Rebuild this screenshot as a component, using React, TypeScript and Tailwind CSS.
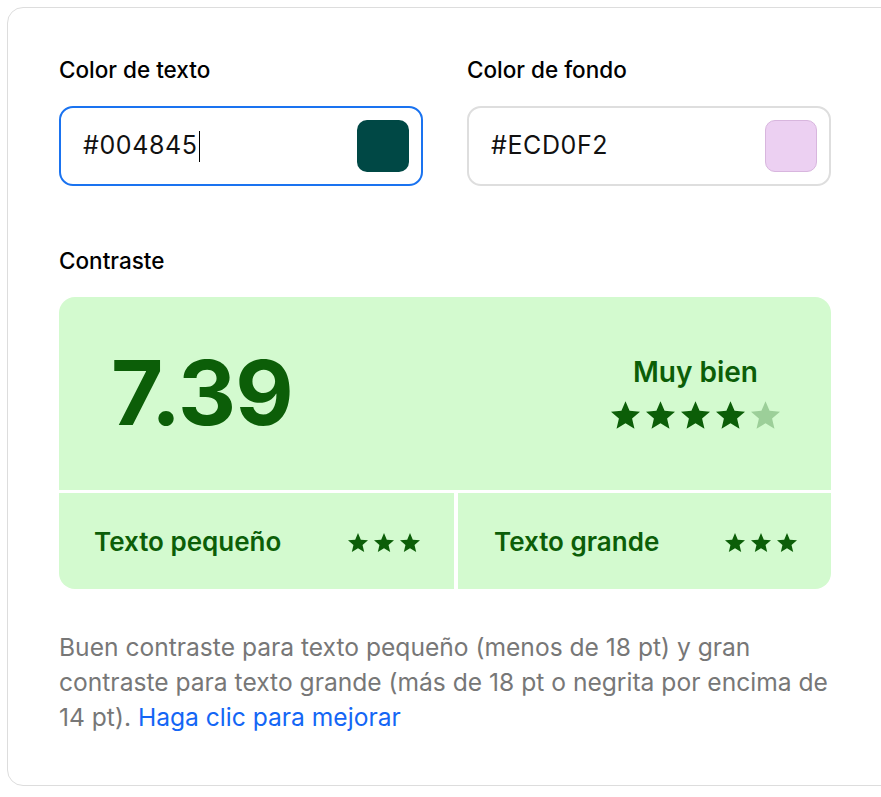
import React from "react";

const STAR = "M12 17.27L18.18 21l-1.64-7.03L22 9.24l-7.19-.61L12 2 9.19 8.63 2 9.24l5.46 4.73L5.82 21z";

function Star({ w, h, className }: { w: number; h: number; className: string }) {
  return (
    <svg width={w} height={h} viewBox="2 2 20 19" className={className}>
      <path d={STAR} fill="currentColor" />
    </svg>
  );
}

function ColorField({
  label,
  value,
  swatch,
  focused,
}: {
  label: string;
  value: string;
  swatch: string;
  focused?: boolean;
}) {
  return (
    <div className="flex flex-col">
      <div className="text-[22.5px] font-medium text-black leading-[26px]">{label}</div>
      <div
        className={
          focused
            ? "mt-[23px] h-[80px] rounded-[14px] border-2 border-[#1a73f0] flex items-center justify-between pl-[22px] pr-[12px]"
            : "mt-[23px] h-[80px] rounded-[14px] border-2 border-[#dedede] flex items-center justify-between pl-[22px] pr-[12px]"
        }
      >
        <div className="flex items-center text-[25px] text-[#111] tracking-[0.6px]">
          {value}
          {focused && <span className="ml-[1px] w-[1px] h-[31px] bg-black" />}
        </div>
        <div className={"w-[52px] h-[52px] rounded-[10px] " + swatch} />
      </div>
    </div>
  );
}

export default function App() {
  return (
    <div
      className="w-[881px] h-[797px] overflow-hidden bg-white pt-[7px] pl-[7px]"
      style={{ fontFamily: "Inter, 'Noto Sans', sans-serif" }}
    >
      <div className="w-[900px] h-[779px] rounded-[16px] border-[1.5px] border-[#dddddd] pl-[51px] pt-[49px]">
        <div className="w-[772px]">
          <div className="grid grid-cols-2 gap-[44px]">
            <ColorField label="Color de texto" value="#004845" swatch="bg-[#004845]" focused />
            <ColorField
              label="Color de fondo"
              value="#ECD0F2"
              swatch="bg-[#ECD0F2] border border-[#d8b6de]"
            />
          </div>

          <div className="mt-[62px] text-[22.5px] font-medium text-black leading-[26px]">Contraste</div>

          <div className="mt-[23px] rounded-[16px] overflow-hidden flex flex-col gap-[3px] bg-white text-[#0c5e08]">
            <div className="h-[193px] bg-[#d3facf] flex items-center justify-between pl-[52px] pr-[51px]">
              <div className="text-[90px] font-bold leading-none tracking-[-1px] mt-[-2px]">7.39</div>
              <div className="flex flex-col items-center mt-[-4px]">
                <div className="text-[28px] font-semibold leading-[34px]">Muy bien</div>
                <div className="mt-[12px] flex gap-[6px]">
                  <Star w={29} h={28} className="text-[#0c5e08]" />
                  <Star w={29} h={28} className="text-[#0c5e08]" />
                  <Star w={29} h={28} className="text-[#0c5e08]" />
                  <Star w={29} h={28} className="text-[#0c5e08]" />
                  <Star w={29} h={28} className="text-[#9ccf99]" />
                </div>
              </div>
            </div>
            <div className="flex gap-[4px] h-[96px]">
              <div className="w-[395px] bg-[#d3facf] flex items-center justify-between pl-[35px] pr-[34px]">
                <span className="text-[26px] font-semibold">Texto pequeño</span>
                <div className="flex gap-[6px] mt-[2px]">
                  <Star w={20} h={19} className="text-[#0c5e08]" />
                  <Star w={20} h={19} className="text-[#0c5e08]" />
                  <Star w={20} h={19} className="text-[#0c5e08]" />
                </div>
              </div>
              <div className="flex-1 bg-[#d3facf] flex items-center justify-between pl-[36px] pr-[34px]">
                <span className="text-[26px] font-semibold">Texto grande</span>
                <div className="flex gap-[6px] mt-[2px]">
                  <Star w={20} h={19} className="text-[#0c5e08]" />
                  <Star w={20} h={19} className="text-[#0c5e08]" />
                  <Star w={20} h={19} className="text-[#0c5e08]" />
                </div>
              </div>
            </div>
          </div>

          <p className="mt-[41px] w-[790px] text-[24.6px] leading-[35px] text-[#777777]">
            Buen contraste para texto pequeño (menos de 18 pt) y gran
            <br />
            contraste para texto grande (más de 18 pt o negrita por encima de
            <br />
            14 pt).{" "}
            <a href="#" className="text-[#1466f5]">
              Haga clic para mejorar
            </a>
          </p>
        </div>
      </div>
    </div>
  );
}
